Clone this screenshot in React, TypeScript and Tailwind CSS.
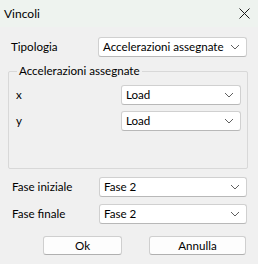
import React from "react";

const Chevron: React.FC = () => (
  <svg width="10" height="6" viewBox="0 0 10 6" className="shrink-0">
    <path d="M1 1 L5 5 L9 1" fill="none" stroke="#606060" strokeWidth="1" />
  </svg>
);

const Combo: React.FC<{ value: string; className?: string }> = ({ value, className = "" }) => (
  <div
    className={`flex h-[20px] items-center justify-between rounded-[3px] border border-[#d0d0d0] border-b-[#b8b8b8] bg-white pl-[4px] pr-[6px] ${className}`}
  >
    <span className="whitespace-nowrap leading-none text-black">{value}</span>
    <Chevron />
  </div>
);

const App: React.FC = () => {
  return (
    <div
      className="flex h-[264px] w-[258px] flex-col bg-[#f0f0f0] text-[11.6px] text-black"
      style={{ fontFamily: '"Segoe UI", Lato, "Noto Sans", sans-serif' }}
    >
      {/* title bar */}
      <div className="flex h-[27px] items-center justify-between bg-[#eef3ef] pl-[4px] pr-[8px]">
        <span className="text-[12px]">Vincoli</span>
        <svg width="11" height="11" viewBox="0 0 11 11">
          <path d="M0.5 0.5 L10.5 10.5 M10.5 0.5 L0.5 10.5" stroke="#1a1a1a" strokeWidth="1" />
        </svg>
      </div>

      <div className="flex flex-col px-[8px] pt-[10px]">
        <div className="flex items-center">
          <span className="w-[90px] pl-[3px]">Tipologia</span>
          <Combo value="Accelerazioni assegnate" className="w-[149px]" />
        </div>

        {/* group box */}
        <div className="relative mt-[14px] h-[98px] w-[240px] rounded-[2px] border border-[#d8d8d8]">
          <span className="absolute left-[8px] top-[-9px] whitespace-nowrap bg-[#f0f0f0] px-[2px] leading-[16px]">
            Accelerazioni assegnate
          </span>
          <div className="flex flex-col gap-[6px] pl-[7px] pt-[13px]">
            <div className="flex items-center">
              <span className="w-[105px]">x</span>
              <Combo value="Load" className="w-[120px]" />
            </div>
            <div className="flex items-center">
              <span className="w-[105px]">y</span>
              <Combo value="Load" className="w-[120px]" />
            </div>
          </div>
        </div>

        <div className="mt-[8px] flex flex-col gap-[7px]">
          <div className="flex items-center">
            <span className="w-[91px] pl-[4px]">Fase iniziale</span>
            <Combo value="Fase 2" className="w-[148px]" />
          </div>
          <div className="flex items-center">
            <span className="w-[91px] pl-[4px]">Fase finale</span>
            <Combo value="Fase 2" className="w-[148px]" />
          </div>
        </div>

        <div className="mt-[12px] flex gap-[27px] pl-[35px]">
          <button className="h-[19px] w-[79px] rounded-[3px] border border-[#cfcfcf] border-b-[#b0b0b0] bg-[#fdfdfd] leading-none">
            Ok
          </button>
          <button className="h-[19px] w-[97px] rounded-[3px] border border-[#cfcfcf] border-b-[#b0b0b0] bg-[#fdfdfd] leading-none">
            Annulla
          </button>
        </div>
      </div>
    </div>
  );
};

export default App;
